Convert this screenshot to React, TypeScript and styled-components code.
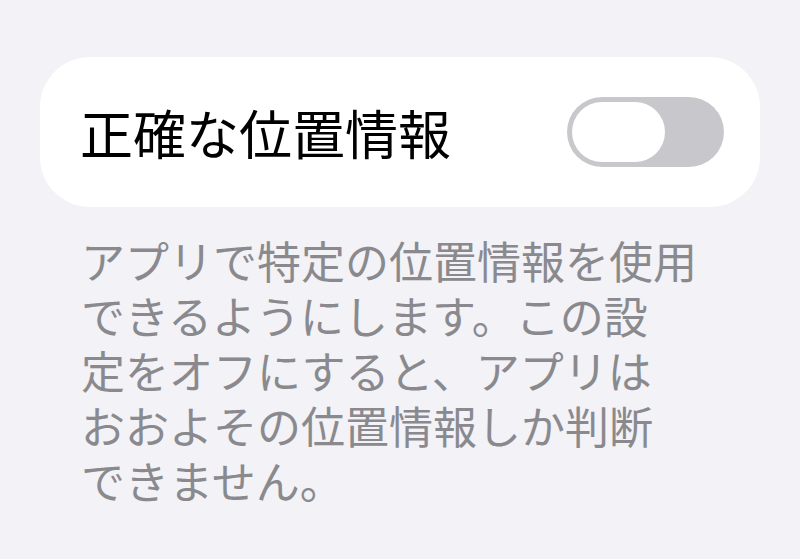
import styled, { createGlobalStyle } from "styled-components";

const GlobalStyle = createGlobalStyle`
	body {
		margin: 0;
		background: #f2f2f7;
		font-family: "Noto Sans CJK JP", "Noto Sans", sans-serif;
	}
`;

const Page = styled.div`
	width: 800px;
	height: 559px;
	padding: 57px 40px 0 40px;
	box-sizing: border-box;
	display: flex;
	flex-direction: column;
`;

const Card = styled.div`
	height: 150px;
	background: #ffffff;
	border-radius: 50px;
	display: flex;
	align-items: center;
	justify-content: space-between;
	padding: 0 36px 0 40px;
`;

const Title = styled.div`
	font-size: 53px;
	color: #000000;
	line-height: 1;
`;

const Track = styled.div<{ $on: boolean }>`
	width: 157px;
	height: 70px;
	border-radius: 35px;
	background: ${(p) => (p.$on ? "#34c759" : "#c8c8cc")};
	padding: 5px;
	box-sizing: border-box;
	display: flex;
	justify-content: ${(p) => (p.$on ? "flex-end" : "flex-start")};
`;

const Knob = styled.div`
	width: 93px;
	height: 60px;
	border-radius: 30px;
	background: #ffffff;
`;

const Footer = styled.div`
	margin-top: 26px;
	padding-left: 41px;
	font-size: 44px;
	line-height: 55px;
	color: #8a8a8e;
`;

const Line = styled.div`
	white-space: nowrap;
	height: 55px;
`;

const lines = [
	"アプリで特定の位置情報を使用",
	"できるようにします。この設",
	"定をオフにすると、アプリは",
	"おおよその位置情報しか判断",
	"できません。",
];

export default function App() {
	return (
		<>
			<GlobalStyle />
			<Page>
				<Card>
					<Title>正確な位置情報</Title>
					<Track $on={false}>
						<Knob />
					</Track>
				</Card>
				<Footer>
					{lines.map((l) => (
						<Line key={l}>{l}</Line>
					))}
				</Footer>
			</Page>
		</>
	);
}
